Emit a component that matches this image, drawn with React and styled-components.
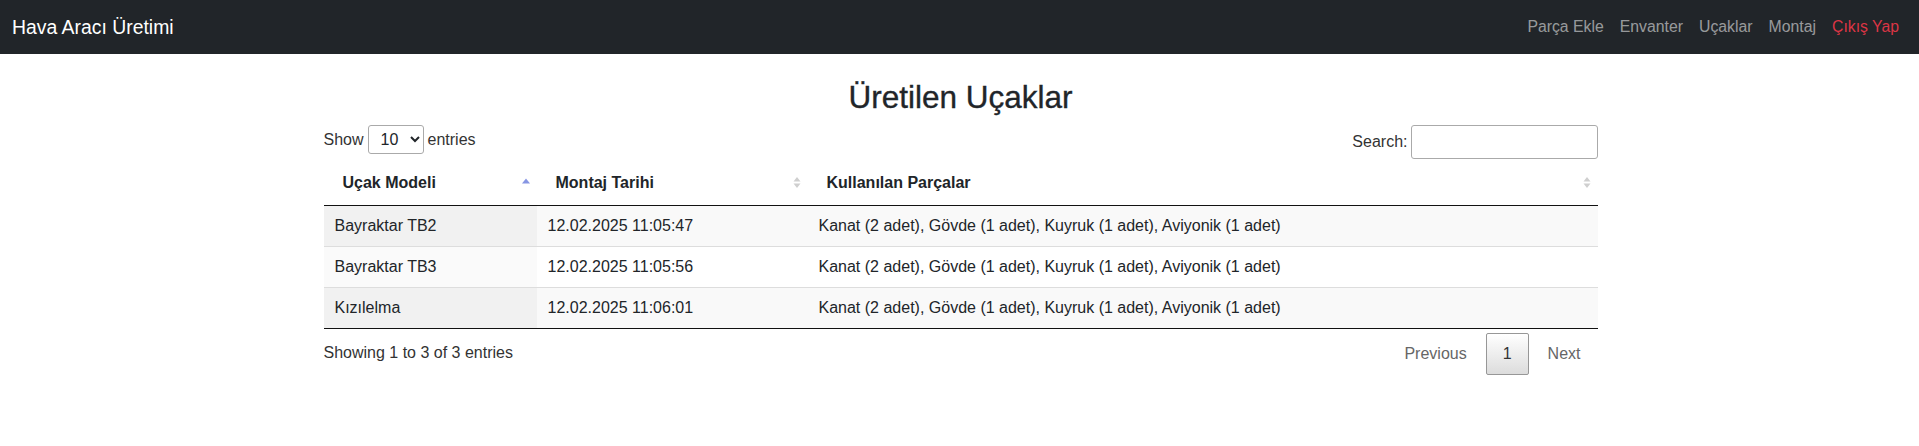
import React from "react";
import styled, { createGlobalStyle } from "styled-components";

const GlobalStyle = createGlobalStyle`
  html, body { margin: 0; padding: 0; background: #fff; }
  body {
    font-family: "Liberation Sans", Arial, Helvetica, sans-serif;
    font-size: 16px;
    line-height: 1.5;
    color: #212529;
  }
  * { box-sizing: border-box; }
`;

const NavBar = styled.nav`
  height: 54px;
  background: #212529;
  display: flex;
  align-items: center;
  justify-content: space-between;
  padding: 0 12px;
`;

const Brand = styled.a`
  color: #fff;
  font-size: 19.4px;
  line-height: 30px;
  text-decoration: none;
`;

const NavLinks = styled.div`
  display: flex;
  align-items: center;
`;

const NavLink = styled.a`
  padding: 0 8px;
  font-size: 15.8px;
  line-height: 24px;
  text-decoration: none;
  color: ${(p) => (p.$danger ? "#dc3545" : "rgba(255,255,255,0.55)")};
`;

const Main = styled.main`
  width: 1274px;
  margin: 0 0 0 calc(50% - 636px);
`;

const Title = styled.h2`
  margin: 25px 0 3px;
  font-size: 31.5px;
  font-weight: 500;
  line-height: 1.2;
  text-align: center;
  color: #212529;
  -webkit-text-stroke: 0.35px #212529;
`;

const Toolbar = styled.div`
  display: flex;
  justify-content: space-between;
  align-items: flex-start;
  padding-top: 5px;
  height: 41px;
`;

const LengthLabel = styled.label`
  display: flex;
  align-items: center;
  gap: 4px;
  height: 30px;
  color: #333;
`;

const Select = styled.select`
  width: 56px;
  height: 29px;
  border: 1px solid #aaa;
  border-radius: 3px;
  padding: 0 4px 0 8px;
  font-family: inherit;
  font-size: 16px;
  color: #212529;
  background: #fff;
`;

const FilterLabel = styled.label`
  display: flex;
  align-items: center;
  gap: 3px;
  height: 35px;
  color: #333;
`;

const SearchInput = styled.input`
  width: 187px;
  height: 34px;
  border: 1px solid #aaa;
  border-radius: 3px;
  padding: 5px;
  font-family: inherit;
  font-size: 16px;
  background: #fff;
`;

const Table = styled.table`
  width: 100%;
  border-collapse: separate;
  border-spacing: 0;
  border-bottom: 1px solid #111;
  table-layout: fixed;
`;

const Th = styled.th`
  width: ${(p) => (p.$w ? `${p.$w}px` : "auto")};
  padding: 10px 4px 10px 19px;
  text-align: left;
  font-weight: bold;
  line-height: 24px;
  border-bottom: 1px solid #111;
  color: #212529;
`;

const HeadInner = styled.div`
  display: flex;
  align-items: center;
  justify-content: space-between;
`;

const Td = styled.td`
  padding: 8px 11px;
  line-height: 24px;
  border-top: ${(p) => (p.$first ? "none" : "1px solid #ddd")};
  background: ${(p) =>
    p.$odd ? (p.$sorted ? "#f1f1f1" : "#f9f9f9") : p.$sorted ? "#fafafa" : "#fff"};
  color: #212529;
`;

const Footer = styled.div`
  display: flex;
  justify-content: space-between;
  align-items: flex-start;
`;

const Info = styled.div`
  padding-top: 12px;
  line-height: 24px;
  color: #333;
`;

const Paginate = styled.div`
  display: flex;
  padding-top: 4px;
`;

const PageButton = styled.a`
  display: block;
  margin-left: 2px;
  padding: 8px 16px;
  min-width: 24px;
  text-align: center;
  line-height: 24px;
  border-radius: 2px;
  border: 1px solid ${(p) => (p.$current ? "#979797" : "transparent")};
  background: ${(p) =>
    p.$current ? "linear-gradient(to bottom, #fff 0%, #dcdcdc 100%)" : "transparent"};
  color: ${(p) => (p.$current ? "#333" : "#666")};
  cursor: default;
`;

const SortIcon = ({ dir }) => (
  <svg width="14" height="19" viewBox="0 0 14 19" aria-hidden="true">
    {dir === "asc" ? (
      <polygon points="3,10.5 11,10.5 7,5.5" fill="#8796e3" />
    ) : (
      <>
        <polygon points="3.5,8.5 10.5,8.5 7,4" fill="#cfcfcf" />
        <polygon points="3.5,10.5 10.5,10.5 7,15" fill="#cfcfcf" />
      </>
    )}
  </svg>
);

const rows = [
  ["Bayraktar TB2", "12.02.2025 11:05:47"],
  ["Bayraktar TB3", "12.02.2025 11:05:56"],
  ["Kızılelma", "12.02.2025 11:06:01"],
];
const parts = "Kanat (2 adet), Gövde (1 adet), Kuyruk (1 adet), Aviyonik (1 adet)";

export default function App() {
  return (
    <>
      <GlobalStyle />
      <NavBar>
        <Brand href="#">Hava Aracı Üretimi</Brand>
        <NavLinks>
          <NavLink href="#">Parça Ekle</NavLink>
          <NavLink href="#">Envanter</NavLink>
          <NavLink href="#">Uçaklar</NavLink>
          <NavLink href="#">Montaj</NavLink>
          <NavLink href="#" $danger>Çıkış Yap</NavLink>
        </NavLinks>
      </NavBar>
      <Main>
        <Title>Üretilen Uçaklar</Title>
        <Toolbar>
          <LengthLabel>
            Show
            <Select defaultValue="10">
              <option value="10">10</option>
              <option value="25">25</option>
              <option value="50">50</option>
              <option value="100">100</option>
            </Select>
            entries
          </LengthLabel>
          <FilterLabel>
            Search:
            <SearchInput type="search" />
          </FilterLabel>
        </Toolbar>
        <Table>
          <thead>
            <tr>
              <Th $w={213}>
                <HeadInner>
                  Uçak Modeli <SortIcon dir="asc" />
                </HeadInner>
              </Th>
              <Th $w={271}>
                <HeadInner>
                  Montaj Tarihi <SortIcon />
                </HeadInner>
              </Th>
              <Th>
                <HeadInner>
                  Kullanılan Parçalar <SortIcon />
                </HeadInner>
              </Th>
            </tr>
          </thead>
          <tbody>
            {rows.map(([model, date], i) => (
              <tr key={model}>
                <Td $first={i === 0} $odd={i % 2 === 0} $sorted>
                  {model}
                </Td>
                <Td $first={i === 0} $odd={i % 2 === 0}>
                  {date}
                </Td>
                <Td $first={i === 0} $odd={i % 2 === 0}>
                  {parts}
                </Td>
              </tr>
            ))}
          </tbody>
        </Table>
        <Footer>
          <Info>Showing 1 to 3 of 3 entries</Info>
          <Paginate>
            <PageButton>Previous</PageButton>
            <PageButton $current>1</PageButton>
            <PageButton>Next</PageButton>
          </Paginate>
        </Footer>
      </Main>
    </>
  );
}
